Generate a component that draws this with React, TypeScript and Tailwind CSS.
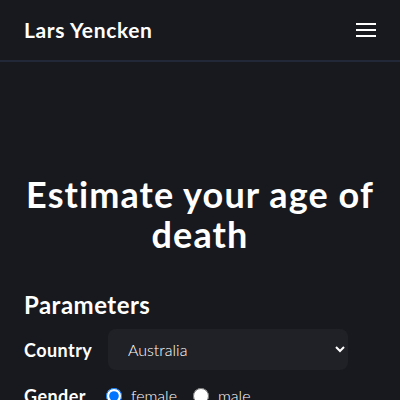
import { useState } from "react";

const font = { fontFamily: "'Lato', 'Noto Sans', sans-serif" };

export default function App() {
  const [gender, setGender] = useState("female");
  return (
    <div className="min-h-screen bg-[#18191e] text-white" style={font}>
      <header className="h-[62px] border-b-2 border-[#232838] flex items-center justify-between px-6">
        <span className="text-[21px] font-bold tracking-[0.03em]">Lars Yencken</span>
        <button className="flex flex-col gap-[4px] w-5">
          <span className="h-[2px] w-5 bg-white" />
          <span className="h-[2px] w-5 bg-white" />
          <span className="h-[2px] w-5 bg-white" />
        </button>
      </header>

      <main className="px-6 pt-[112px]">
        <h1 className="text-4xl font-bold text-center tracking-[0.03em]">Estimate your age of death</h1>

        <section className="mt-[35px]">
          <h2 className="text-2xl font-bold tracking-[0.02em]">Parameters</h2>
          <div className="mt-2 flex items-center gap-4">
            <label className="text-lg font-bold tracking-[0.025em] w-[68px]">Country</label>
            <select
              defaultValue="Australia"
              className="w-[240px] h-[41px] rounded-lg bg-[#202127] text-white text-base font-light pl-4 pr-2"
            >
              <option>Australia</option>
              <option>Austria</option>
            </select>
          </div>
          <div className="mt-3 flex items-center">
            <label className="text-lg font-bold tracking-[0.025em] w-[82px]">Gender</label>
            <label className="flex items-center gap-[9px] font-light">
              <input
                type="radio"
                className="w-4 h-4"
                checked={gender === "female"}
                onChange={() => setGender("female")}
              />
              female
            </label>
            <label className="ml-4 flex items-center gap-[9px] font-light">
              <input
                type="radio"
                className="w-4 h-4"
                checked={gender === "male"}
                onChange={() => setGender("male")}
              />
              male
            </label>
          </div>
        </section>
      </main>
    </div>
  );
}
